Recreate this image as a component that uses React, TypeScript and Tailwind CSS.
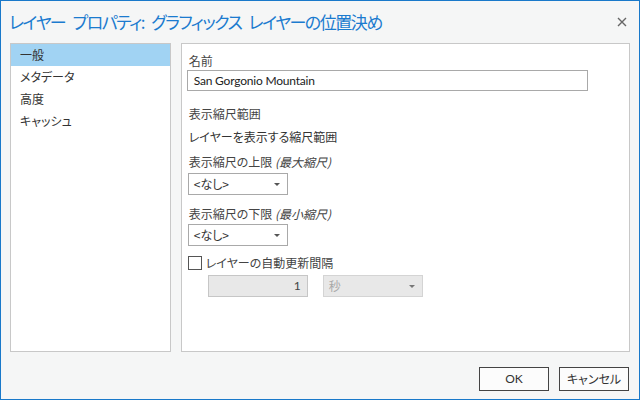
import React, { useState } from 'react';

const FONT = "font-['Noto_Sans_CJK_JP','Noto_Sans',sans-serif] [font-feature-settings:'palt']";
const LATIN = "font-['Lato','Noto_Sans_CJK_JP',sans-serif]";

const NAV_ITEMS = ['一般', 'メタデータ', '高度', 'キャッシュ'];

const Caret = ({ muted = false }: { muted?: boolean }) => (
  <svg width="6" height="3" viewBox="0 0 6 3" className="shrink-0">
    <path d="M0 0 H6 L3 3 Z" fill={muted ? '#777' : '#555'} />
  </svg>
);

const Select = ({ value, disabled = false, className = '' }: { value: string; disabled?: boolean; className?: string }) => (
  <div
    className={`flex items-center justify-between h-[22px] w-[100px] px-[5px] pr-[7px] border ${
      disabled ? 'border-[#d4d4d4] bg-[#e8e8e8] text-[#a8a8a8]' : 'border-[#a9a9a9] bg-white text-[#333]'
    } ${className}`}
  >
    <span className="text-[12px] leading-none">{value}</span>
    <Caret muted={disabled} />
  </div>
);

const App: React.FC = () => {
  const [active, setActive] = useState(0);
  const [autoRefresh, setAutoRefresh] = useState(false);

  return (
    <div className={`w-[640px] h-[400px] flex flex-col border border-[#1979ca] bg-[#f5f6f6] ${FONT}`}>
      {/* title bar */}
      <div className="h-[42px] shrink-0 flex items-center justify-between pl-[8px] pr-[12px]">
        <span className="text-[17px] tracking-[-1.5px] [word-spacing:5px] text-[#1b7bcf]">
          レイヤー プロパティ: グラフィックス レイヤーの位置決め
        </span>
        <svg width="10" height="10" viewBox="0 0 10 10">
          <path d="M1 1 L9 9 M9 1 L1 9" stroke="#666" strokeWidth="1.4" />
        </svg>
      </div>

      <div className="flex gap-[10px] px-[9px]">
        {/* side nav */}
        <div className="w-[161px] h-[309px] border border-[#c8c8c8] bg-white flex flex-col">
          {NAV_ITEMS.map((item, i) => (
            <button
              key={item}
              onClick={() => setActive(i)}
              className={`h-[22px] text-left pl-[9px] text-[12px] text-[#333] ${active === i ? 'bg-[#a1d3f3]' : ''}`}
            >
              {item}
            </button>
          ))}
        </div>

        {/* content */}
        <div className="w-[450px] h-[309px] border border-[#c8c8c8] bg-white px-[5px] pt-[9px] text-[12px] text-[#444]">
          <div className="leading-[16px] pl-[2px]">名前</div>
          <div className={`mt-[1px] w-[401px] h-[21px] border border-[#a9a9a9] flex items-center px-[6px] text-[#222] tracking-[-0.2px] ${LATIN}`}>
            San Gorgonio Mountain
          </div>

          <div className="mt-[15px] leading-[16px] pl-[2px]">表示縮尺範囲</div>
          <div className="mt-[7px] leading-[16px] pl-[2px] text-[#333]">レイヤーを表示する縮尺範囲</div>

          <div className="mt-[9px] leading-[16px] pl-[2px]">
            表示縮尺の上限 <span className="italic">(最大縮尺)</span>
          </div>
          <Select value="<なし>" className="mt-[3px] ml-[1px]" />

          <div className="mt-[11px] leading-[16px] pl-[2px]">
            表示縮尺の下限 <span className="italic">(最小縮尺)</span>
          </div>
          <Select value="<なし>" className="mt-[2px] ml-[1px]" />

          <label className="mt-[10px] ml-[1px] flex items-center gap-[4px] h-[14px] cursor-pointer">
            <input
              type="checkbox"
              checked={autoRefresh}
              onChange={(e) => setAutoRefresh(e.target.checked)}
              className="appearance-none w-[14px] h-[14px] border border-[#555] bg-white m-0"
            />
            <span className="leading-[16px]">レイヤーの自動更新間隔</span>
          </label>

          <div className="mt-[5px] ml-[21px] flex items-center gap-[15px]">
            <div className={`w-[100px] h-[22px] border border-[#c6c6c6] bg-[#e8e8e8] flex items-center justify-end pr-[6px] text-[#444] ${LATIN}`}>
              1
            </div>
            <Select value="秒" disabled />
          </div>
        </div>
      </div>

      {/* footer */}
      <div className="flex justify-end gap-[10px] pr-[10px] mt-[15px]">
        <button className={`w-[70px] h-[24px] border border-[#444] bg-[#fcfcfc] text-[12px] text-[#333] ${LATIN}`}>OK</button>
        <button className="w-[70px] h-[24px] border border-[#444] bg-[#fcfcfc] text-[12px] text-[#333]">キャンセル</button>
      </div>
    </div>
  );
};

export default App;
